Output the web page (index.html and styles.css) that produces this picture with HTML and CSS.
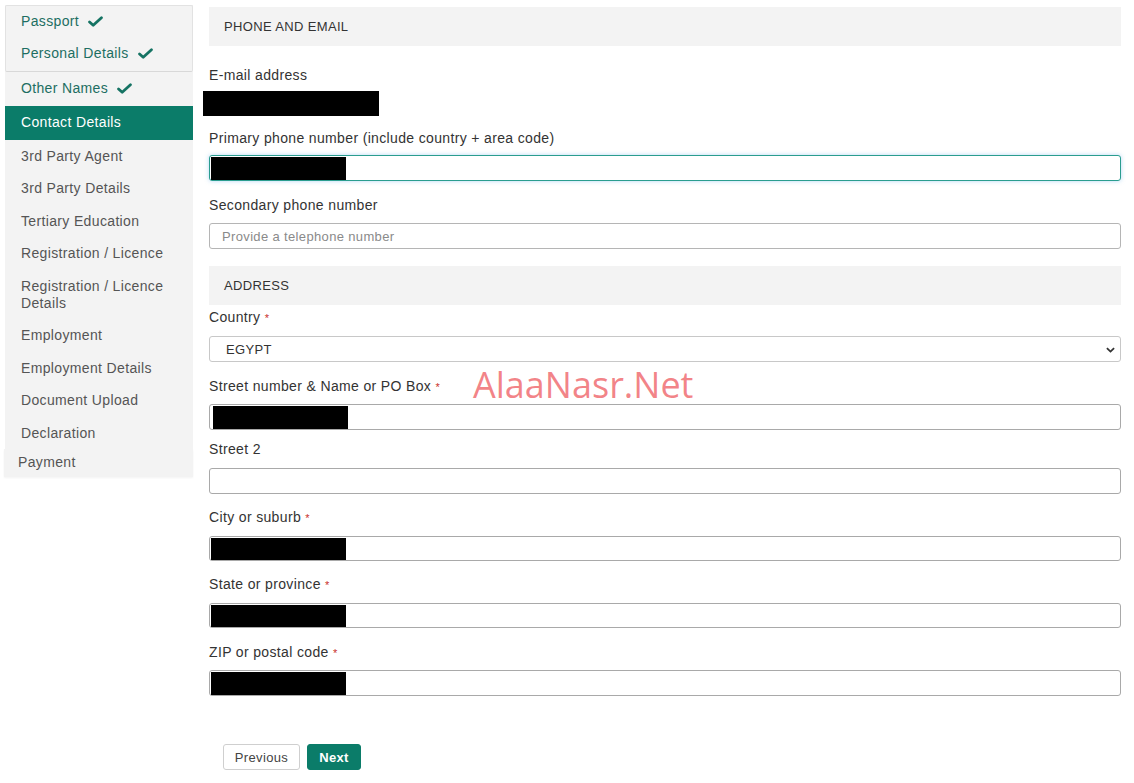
FILE: index.html
```html
<!DOCTYPE html>
<html>
<head>
<meta charset="utf-8">
<link rel="stylesheet" href="styles.css">
</head>
<body>
<div class="page">
  <nav class="sidebar">
    <div class="group-done">
      <div class="item done">Passport <svg class="check" viewBox="0 0 16 12"><path d="M1.5 6.5 L5.5 10.2 L14.5 1.8" /></svg></div>
      <div class="item done">Personal Details <svg class="check" viewBox="0 0 16 12"><path d="M1.5 6.5 L5.5 10.2 L14.5 1.8" /></svg></div>
    </div>
    <div class="item done other">Other Names <svg class="check" viewBox="0 0 16 12"><path d="M1.5 6.5 L5.5 10.2 L14.5 1.8" /></svg></div>
    <div class="item active">Contact Details</div>
    <div class="item">3rd Party Agent</div>
    <div class="item">3rd Party Details</div>
    <div class="item">Tertiary Education</div>
    <div class="item">Registration / Licence</div>
    <div class="item">Registration / Licence Details</div>
    <div class="item">Employment</div>
    <div class="item">Employment Details</div>
    <div class="item">Document Upload</div>
    <div class="item">Declaration</div>
    <div class="item payment">Payment</div>
  </nav>

  <main class="main">
    <div class="section-head">PHONE AND EMAIL</div>

    <div class="field f-email">
      <div class="label">E-mail address</div>
      <div class="redact-text"></div>
    </div>

    <div class="field f-primary">
      <div class="label">Primary phone number (include country + area code)</div>
      <div class="input focused"><span class="redact"></span></div>
    </div>

    <div class="field f-secondary">
      <div class="label">Secondary phone number</div>
      <div class="input"><span class="placeholder">Provide a telephone number</span></div>
    </div>

    <div class="section-head addr">ADDRESS</div>

    <div class="field f-country">
      <div class="label">Country <span class="req">*</span></div>
      <div class="input select"><span class="value">EGYPT</span>
        <svg class="chev" viewBox="0 0 10 6"><path d="M1 1 L5 4.8 L9 1"/></svg>
      </div>
    </div>

    <div class="field f-street">
      <div class="label">Street number &amp; Name or PO Box <span class="req">*</span></div>
      <div class="input"><span class="redact shift"></span></div>
    </div>

    <div class="field f-street2">
      <div class="label">Street 2</div>
      <div class="input"></div>
    </div>

    <div class="field f-city">
      <div class="label">City or suburb <span class="req">*</span></div>
      <div class="input short"><span class="redact"></span></div>
    </div>

    <div class="field f-state">
      <div class="label">State or province <span class="req">*</span></div>
      <div class="input short"><span class="redact"></span></div>
    </div>

    <div class="field f-zip">
      <div class="label">ZIP or postal code <span class="req">*</span></div>
      <div class="input"><span class="redact"></span></div>
    </div>

    <div class="buttons">
      <button class="btn prev">Previous</button>
      <button class="btn next">Next</button>
    </div>
  </main>
</div>
<div class="watermark">AlaaNasr.Net</div>
</body>
</html>
```

FILE: styles.css
```css
* { box-sizing: border-box; }
html, body { margin: 0; padding: 0; background: #fff; }
body {
  font-family: "Liberation Sans", Arial, sans-serif;
  font-size: 14px;
  letter-spacing: 0.35px;
  color: #333;
  width: 1134px;
  height: 783px;
  overflow: hidden;
  position: relative;
}
.page {
  display: flex;
  align-items: flex-start;
}

/* Sidebar */
.sidebar {
  width: 188px;
  margin: 5px 0 0 5px;
  background: #f3f3f3;
  display: flex;
  flex-direction: column;
}
.group-done {
  border: 1px solid #e2e2e2;
  border-bottom: 1px solid #d8d8d8;
  border-radius: 2px;
}
.item {
  padding: 8px 16px 7.5px;
  line-height: 17px;
  font-size: 14px;
  color: #555;
  display: flex;
  align-items: center;
  flex-shrink: 0;
}
.group-done .item { padding: 7px 15px 9px; }
.group-done .item + .item { padding: 6px 15px 9px; }
.item.other { padding-top: 8px; padding-bottom: 9px; }
.item.done { color: #1d6e62; }
.check {
  width: 15px;
  height: 11px;
  margin-left: 9px;
  fill: none;
  stroke: #157363;
  stroke-width: 3;
  stroke-linecap: round;
  stroke-linejoin: round;
}
.item.active {
  background: #0b7c69;
  color: #fff;
  padding-bottom: 8.5px;
}
.item.payment {
  margin-left: -1px;
  padding-left: 14px;
  padding-top: 5px;
  padding-bottom: 6px;
  background: #f3f3f3;
  box-shadow: 0 1px 2px rgba(0,0,0,0.05);
}

/* Main */
.main {
  width: 912px;
  margin-left: 16px;
  padding-top: 7px;
}
.section-head {
  background: #f3f3f3;
  height: 39px;
  line-height: 39px;
  padding-left: 15px;
  font-size: 13px;
  color: #333;
}
.section-head.addr { margin-top: 17px; }

.label {
  height: 17px;
  line-height: 17px;
  font-size: 14px;
  color: #333;
  margin-bottom: 9px;
  white-space: nowrap;
}
.req { color: #c9302c; font-size: 11px; line-height: 1; }
.f-email { margin-top: 21px; }
.f-email .label { margin-bottom: 7px; }
.redact-text {
  width: 176px;
  height: 25px;
  background: #000;
  margin-left: -6px;
}
.f-primary { margin-top: 14px; }
.f-primary .label { margin-bottom: 8px; }
.f-secondary { margin-top: 16px; }
.f-country { margin-top: 4px; }
.f-country .label { margin-bottom: 10px; }
.f-street { margin-top: 16px; }
.f-street2 { margin-top: 11px; }
.f-street2 .label { margin-bottom: 10px; }
.f-city { margin-top: 15px; }
.f-city .label { margin-bottom: 10px; }
.f-state { margin-top: 15px; }
.f-state .label { margin-bottom: 10px; }
.f-zip { margin-top: 16px; }

.input {
  height: 26px;
  border: 1px solid #a9a9a9;
  border-radius: 3px;
  background: #fff;
  position: relative;
  display: flex;
  align-items: center;
}
.input.short { height: 25px; }
.input.focused {
  border-color: #2a9d8f;
  box-shadow: 0 0 4px rgba(102, 175, 233, 0.5);
}
.f-country .input { border-color: #c8c8c8; }
.f-secondary .input { border-color: #b5b5b5; }
.redact {
  display: block;
  width: 135px;
  height: calc(100% - 1px);
  background: #000;
  margin-left: 1px;
}
.redact.shift { margin-left: 3px; }
.placeholder {
  padding-left: 12px;
  font-size: 13px;
  color: #8a8a8a;
}
.select .value {
  padding-left: 16px;
  font-size: 13px;
  color: #333;
}
.chev {
  position: absolute;
  right: 5px;
  top: 10px;
  width: 9px;
  height: 6px;
  fill: none;
  stroke: #333;
  stroke-width: 2;
}

.buttons {
  margin-top: 48px;
  padding-left: 14px;
  display: flex;
  gap: 7px;
}
.btn {
  height: 26px;
  border-radius: 3px;
  font-family: "Liberation Sans", Arial, sans-serif;
  font-size: 13px;
  letter-spacing: 0.35px;
  padding: 0;
  cursor: pointer;
}
.btn.prev {
  width: 77px;
  background: #fff;
  border: 1px solid #cfcfcf;
  color: #444;
}
.btn.next {
  width: 54px;
  background: #0b7c69;
  border: 1px solid #0b7c69;
  color: #fff;
  font-weight: bold;
}

.watermark {
  position: absolute;
  left: 473px;
  top: 361px;
  font-family: "Open Sans", "Noto Sans", sans-serif;
  font-size: 36px;
  line-height: 48px;
  letter-spacing: 0;
  color: rgba(240, 110, 115, 0.85);
  pointer-events: none;
}
```
